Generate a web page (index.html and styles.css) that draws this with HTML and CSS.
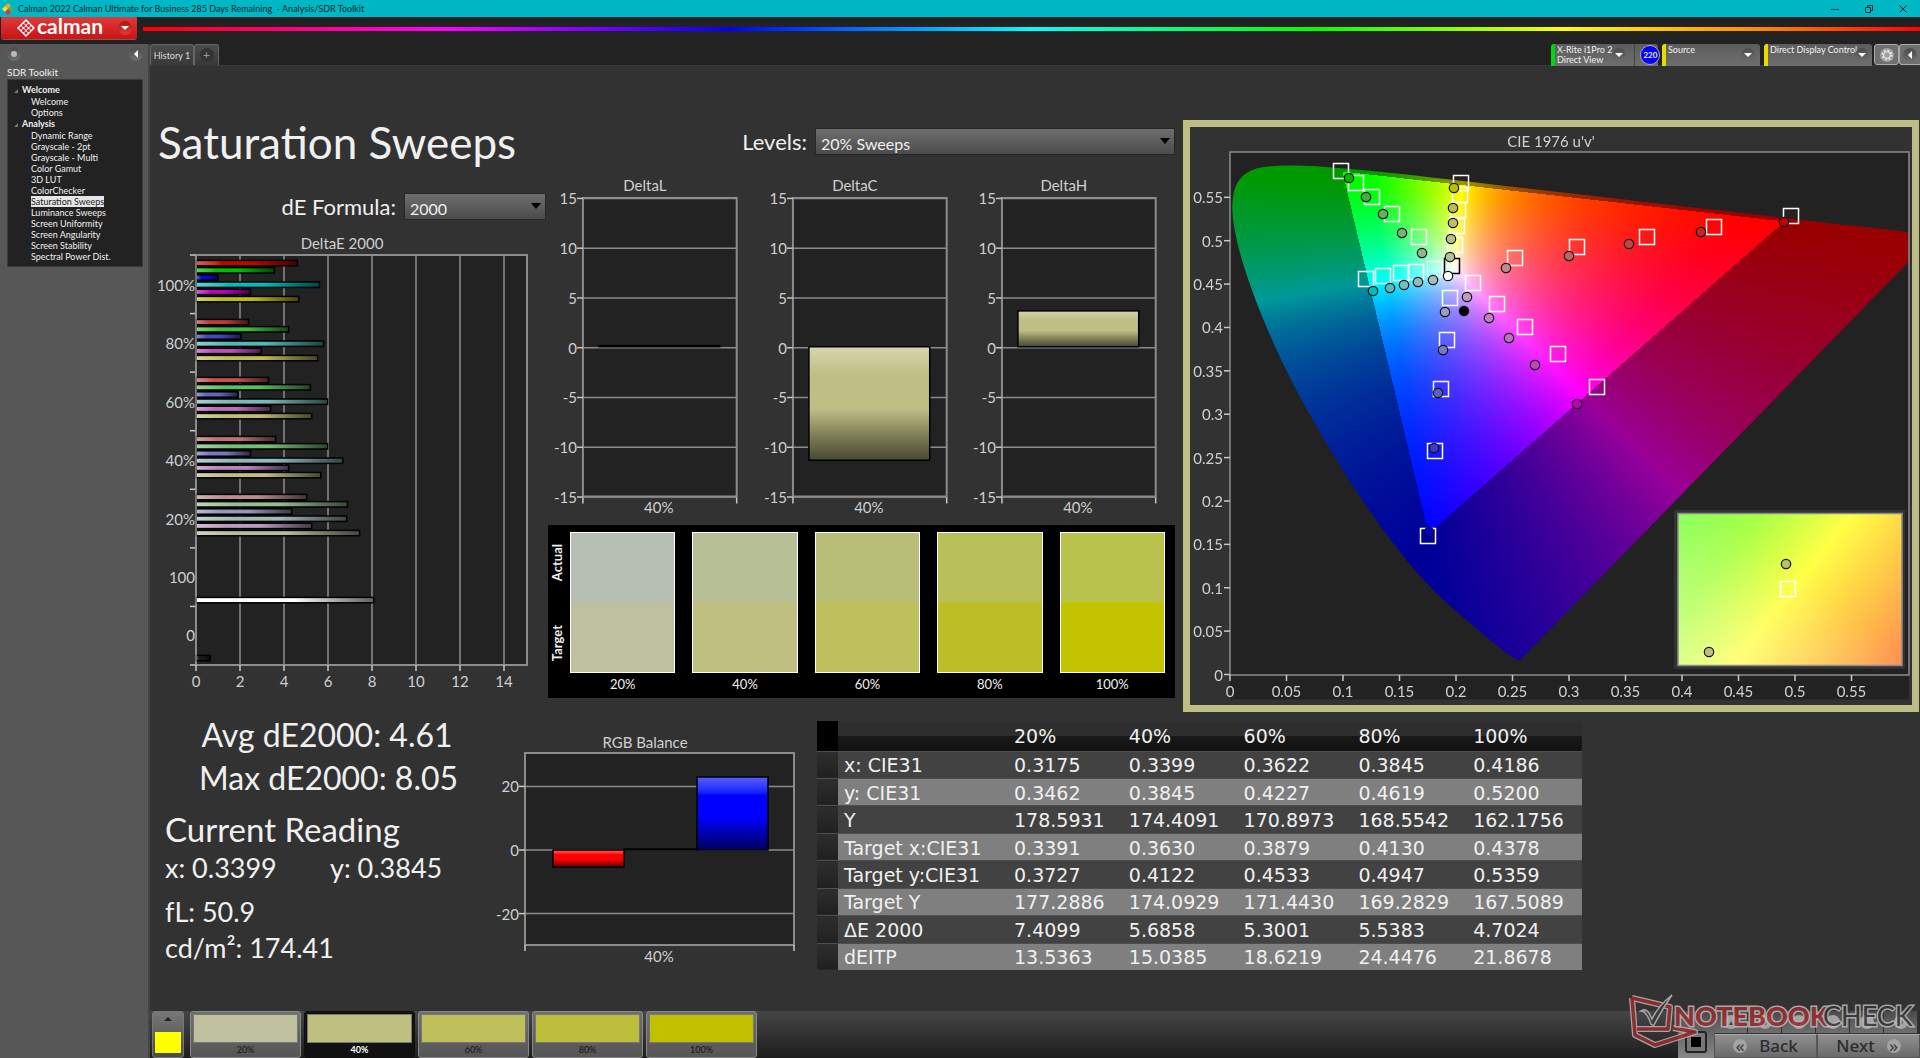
FILE: index.html
```html
<!DOCTYPE html>
<html lang="en">
<head>
<meta charset="utf-8">
<title>Calman 2022 - Analysis/SDR Toolkit</title>
<link rel="stylesheet" href="styles.css">
</head>
<body>
<header class="titlebar">
  <svg class="app-icon" viewBox="0 0 12 12" aria-hidden="true">
    <path d="M6 0l3 3-3 3-3-3z" fill="#f6a81c"/><path d="M9 3l3 3-3 3-3-3z" fill="#35c04a"/>
    <path d="M3 3l3 3-3 3-3-3z" fill="#f7e427"/><path d="M6 6l3 3-3 3-3-3z" fill="#e8265c"/>
  </svg>
  <span class="app-title">Calman 2022 Calman Ultimate for Business 285 Days Remaining&nbsp; - Analysis/SDR Toolkit</span>
  <div class="window-controls">
    <button aria-label="Minimize"><svg viewBox="0 0 10 10"><path d="M1 5.5h8"/></svg></button>
    <button aria-label="Restore"><svg viewBox="0 0 10 10"><path d="M1.500 3.500h5v5h-5zM3.500 3.500v-2h5v5h-2"/></svg></button>
    <button aria-label="Close"><svg viewBox="0 0 10 10"><path d="M1.500 1.500l7 7M8.500 1.500l-7 7"/></svg></button>
  </div>
</header>

<div class="brandbar">
  <button class="brand">
    <svg class="brand-mark" viewBox="0 0 18 18" aria-hidden="true">
      <path d="M9 0l9 9-9 9-9-9z" fill="#fff"/>
      <g fill="#d81e1e"><circle cx="9" cy="4" r="1.600"/><circle cx="6.500" cy="6.500" r="1.600"/><circle cx="11.500" cy="6.500" r="1.600"/><circle cx="4" cy="9" r="1.600"/><circle cx="9" cy="9" r="1.600"/><circle cx="14" cy="9" r="1.600"/><circle cx="6.500" cy="11.500" r="1.600"/><circle cx="11.500" cy="11.500" r="1.600"/><circle cx="9" cy="14" r="1.600"/></g>
    </svg>
    <span>calman</span>
    <i class="knob knob-red"><i class="caret-down"></i></i>
  </button>
  <div class="spectrum"></div>
</div>

<div class="workspace">
  <aside class="sidebar">
    <div class="sidebar-tools">
      <span class="knob"><i class="bead"></i></span>
      <button class="knob" aria-label="Collapse sidebar"><i class="caret-left"></i></button>
    </div>
    <h2>SDR Toolkit</h2>
    <nav class="tree">
      <h3>Welcome</h3>
      <a href="#">Welcome</a>
      <a href="#">Options</a>
      <h3>Analysis</h3>
      <a href="#">Dynamic Range</a>
      <a href="#">Grayscale - 2pt</a>
      <a href="#">Grayscale - Multi</a>
      <a href="#">Color Gamut</a>
      <a href="#">3D LUT</a>
      <a href="#">ColorChecker</a>
      <a href="#" class="current">Saturation Sweeps</a>
      <a href="#">Luminance Sweeps</a>
      <a href="#">Screen Uniformity</a>
      <a href="#">Screen Angularity</a>
      <a href="#">Screen Stability</a>
      <a href="#">Spectral Power Dist.</a>
    </nav>
  </aside>

  <div class="content">
    <div class="tabbar">
      <button class="tab">History 1</button>
      <button class="tab tab-add" aria-label="Add tab"><span class="knob knob-dark">+</span></button>
      <div class="devices">
        <div class="device device-meter">
          <span class="device-name">X-Rite i1Pro 2<br>Direct View</span>
          <button class="knob" aria-label="Meter menu"><i class="caret-down"></i></button>
          <span class="badge-slot"><span class="badge">220</span></span>
        </div>
        <div class="device device-source">
          <span class="device-name">Source</span>
          <button class="knob" aria-label="Source menu"><i class="caret-down"></i></button>
        </div>
        <div class="device device-display">
          <span class="device-name">Direct Display Control</span>
          <button class="knob" aria-label="Display menu"><i class="caret-down"></i></button>
        </div>
        <button class="tool" aria-label="Settings"><span class="knob knob-light">
          <svg class="gear" viewBox="0 0 12 12"><circle cx="6" cy="6" r="4.600" stroke-width="1.600" stroke-dasharray="1.800 1.810"/><circle cx="6" cy="6" r="3.400"/></svg></span></button>
        <button class="tool tool-last" aria-label="Collapse panel"><span class="knob"><i class="caret-left"></i></span></button>
      </div>
    </div>

    <main class="stage">
      <div class="top">
        <section class="col-error">
          <h1>Saturation Sweeps</h1>
          <div class="field">
            <label for="formula">dE Formula:</label>
            <span class="select formula"><select id="formula"><option>2000</option></select></span>
          </div>
          <svg id="delta-e" class="chart" viewBox="150 232 396 468" role="img" aria-label="DeltaE 2000"></svg>
        </section>

        <section class="col-delta">
          <div class="field">
            <label for="levels">Levels:</label>
            <span class="select levels"><select id="levels"><option>20% Sweeps</option></select></span>
          </div>
          <div class="delta-row">
            <svg id="delta-l" class="chart" viewBox="0 0 210 344" role="img" aria-label="DeltaL"></svg>
            <svg id="delta-c" class="chart" viewBox="0 0 210 344" role="img" aria-label="DeltaC"></svg>
            <svg id="delta-h" class="chart" viewBox="0 0 210 344" role="img" aria-label="DeltaH"></svg>
          </div>
          <div class="compare">
            <div class="compare-side"><span>Actual</span><span>Target</span></div>
            <figure><div class="pair p20"></div><figcaption>20%</figcaption></figure>
            <figure><div class="pair p40"></div><figcaption>40%</figcaption></figure>
            <figure><div class="pair p60"></div><figcaption>60%</figcaption></figure>
            <figure><div class="pair p80"></div><figcaption>80%</figcaption></figure>
            <figure><div class="pair p100"></div><figcaption>100%</figcaption></figure>
          </div>
        </section>

        <section class="col-cie">
          <div class="cie">
            <canvas id="cie-colors" width="722" height="578"></canvas>
            <svg id="cie-marks" viewBox="1190 127 722 578" role="img" aria-label="CIE 1976 u'v'"></svg>
          </div>
        </section>
      </div>

      <div class="bottom">
        <section class="stats">
          <p class="big">Avg dE2000: 4.61</p>
          <p class="big">Max dE2000: 8.05</p>
          <h2>Current Reading</h2>
          <p class="pair-xy"><span>x: 0.3399</span><span>y: 0.3845</span></p>
          <p class="lum">fL: 50.9</p>
          <p>cd/m²: 174.41</p>
        </section>
        <section><svg id="rgb" class="chart" viewBox="492 733 318 244" role="img" aria-label="RGB Balance"></svg></section>
        <section class="data">
          <table>
            <colgroup><col class="c-gutter"><col class="c-label"><col><col><col><col><col></colgroup>
            <thead><tr><td></td><th></th><th>20%</th><th>40%</th><th>60%</th><th>80%</th><th>100%</th></tr></thead>
            <tbody>
              <tr><td></td><th>x: CIE31</th><td>0.3175</td><td>0.3399</td><td>0.3622</td><td>0.3845</td><td>0.4186</td></tr>
              <tr><td></td><th>y: CIE31</th><td>0.3462</td><td>0.3845</td><td>0.4227</td><td>0.4619</td><td>0.5200</td></tr>
              <tr><td></td><th>Y</th><td>178.5931</td><td>174.4091</td><td>170.8973</td><td>168.5542</td><td>162.1756</td></tr>
              <tr><td></td><th>Target x:CIE31</th><td>0.3391</td><td>0.3630</td><td>0.3879</td><td>0.4130</td><td>0.4378</td></tr>
              <tr><td></td><th>Target y:CIE31</th><td>0.3727</td><td>0.4122</td><td>0.4533</td><td>0.4947</td><td>0.5359</td></tr>
              <tr><td></td><th>Target Y</th><td>177.2886</td><td>174.0929</td><td>171.4430</td><td>169.2829</td><td>167.5089</td></tr>
              <tr><td></td><th>ΔE 2000</th><td>7.4099</td><td>5.6858</td><td>5.3001</td><td>5.5383</td><td>4.7024</td></tr>
              <tr><td></td><th>dEITP</th><td>13.5363</td><td>15.0385</td><td>18.6219</td><td>24.4476</td><td>21.8678</td></tr>
            </tbody>
          </table>
        </section>
      </div>
    </main>

    <footer class="dock">
      <button class="current-color" aria-label="Current color"><i class="caret-up"></i><span></span></button>
      <button class="patch k20"><span></span>20%</button>
      <button class="patch k40 active"><span></span>40%</button>
      <button class="patch k60"><span></span>60%</button>
      <button class="patch k80"><span></span>80%</button>
      <button class="patch k100"><span></span>100%</button>
      <div class="transport">
        <button class="stop" aria-label="Stop"><i></i></button>
        <div class="transport-right">
          <div class="mini">
            <button aria-label="Up"><i class="knob knob-pale">▴</i></button>
            <button aria-label="Halt"><i class="knob knob-pale">■</i></button>
            <button aria-label="Play"><i class="knob knob-pale">▸</i></button>
            <button aria-label="Step"><i class="knob knob-pale">▹</i></button>
            <button aria-label="Loop"><i class="knob knob-pale">∞</i></button>
            <button aria-label="Repeat"><i class="knob knob-pale">↻</i></button>
          </div>
          <div class="pager">
            <button><i class="knob knob-pale">«</i>Back</button>
            <button>Next<i class="knob knob-pale">»</i></button>
          </div>
        </div>
      </div>
      <svg class="watermark" viewBox="0 0 288 56" role="img" aria-label="Notebookcheck">
        <g fill="none" stroke-linejoin="round">
          <path d="M4 4L42 13L40 35L9 35M4 4L7 41L27 51L67 38L45 34" stroke="#b9b9b9" stroke-width="6"/>
          <path d="M4 4L42 13L40 35L9 35M4 4L7 41L27 51L67 38L45 34" stroke="#9c2b2e" stroke-width="3.500"/>
        </g>
        <path d="M13 17q5-3 8 2l3 6q6-13 20-24-9 13-18 30-2 1-3-1-3-8-5-10-2-3-5-3z" fill="#3c3c3c" stroke="#b9b9b9" stroke-width="1.500"/>
        <text x="46" y="32" class="mark-bold">NOTEBOOK</text>
        <text x="195" y="32" class="mark-thin">CHECK</text>
      </svg>
    </footer>
  </div>
</div>
<script src="charts.js"></script>
</body>
</html>
```
FILE: styles.css
```css
* { box-sizing: border-box; }
body {
  margin: 0;
  min-height: 100vh;
  display: flex;
  flex-direction: column;
  background: #323232;
  color: #f0f0f0;
  font-family: Lato, "Liberation Sans", sans-serif;
  font-size: 15px;
}
h1, h2, h3, p, figure { margin: 0; font-weight: 400; }
button { border: 0; padding: 0; margin: 0; color: inherit; font: inherit; background: none; }
a { color: inherit; text-decoration: none; }
svg { display: block; }

/* window title */
.titlebar {
  height: 17px;
  display: flex;
  align-items: center;
  gap: 4px;
  padding-left: 2px;
  background: #00b7c6;
  color: #06262a;
}
.app-icon { width: 12px; height: 12px; }
.app-title { font-size: 9px; line-height: 16px; }
.window-controls { margin-left: auto; display: flex; }
.window-controls button { width: 34px; height: 16px; display: flex; justify-content: center; align-items: center; }
.window-controls svg { width: 10px; height: 10px; fill: none; stroke: #06262a; }

/* brand strip */
.brandbar { height: 27px; display: flex; background: #222; padding-left: 1px; gap: 6px; }
.brand {
  width: 136px;
  height: 23px;
  display: flex;
  align-items: center;
  padding-left: 16px;
  border-radius: 0 0 3px 3px;
  background: linear-gradient(#e03a3a, #c81414);
  border-bottom: 1px solid #8b5555;
  color: #fff;
  font-size: 21px;
  font-weight: 700;
  line-height: 18px;
}
.brand-mark { width: 18px; height: 18px; margin-right: 2px; }
.brand span { padding-bottom: 4px; }
.brand .knob-red { margin-left: auto; margin-right: 5px; }
.spectrum {
  flex: 1;
  height: 4px;
  margin-top: 10px;
  background: linear-gradient(90deg, #f00, #f0f 17%, #00f 33%, #0ff 50%, #0f0 66%, #ff0 80%, #f80 91%, #f00);
}

.knob {
  width: 14px;
  height: 14px;
  flex: none;
  display: inline-flex;
  align-items: center;
  justify-content: center;
  border-radius: 50%;
  background: linear-gradient(#4c4c4c, #6e6e6e);
  font-style: normal;
}
.knob-red { background: linear-gradient(#a81616, #e23c3c); }
.knob-dark { background: #333; color: #999; font-size: 12px; line-height: 14px; }
.knob-light { background: #a0a0a0; }
.knob-pale { background: #a4a4a4; color: #444; }
.caret-down { border: 4px solid transparent; border-top-color: #fff; border-bottom: 0; }
.caret-up { border: 4px solid transparent; border-bottom-color: #222; border-top: 0; }
.caret-left { border: 4px solid transparent; border-right-color: #fff; border-left: 0; }
.bead { width: 6px; height: 6px; border-radius: 50%; background: #bbb; }

.workspace { flex: 1; display: flex; }

/* sidebar */
.sidebar { width: 150px; flex: none; background: #575757; border-right: 2px solid #454545; padding: 3px 5px 0 7px; }
.sidebar-tools { display: flex; justify-content: space-between; height: 14px; }
.sidebar h2 { font-size: 10px; line-height: 12px; margin: 5px 0 1px; }
.tree { height: 188px; background: #222; border: 1px solid #3a3a3a; padding: 4px 0 0 23px; font-size: 9px; }
.tree a { display: block; width: max-content; height: 11px; line-height: 11px; }
.tree h3 { font-size: 9px; font-weight: 700; line-height: 12px; margin-left: -9px; position: relative; }
.tree h3::before { content: ""; position: absolute; left: -8px; top: 5px; border: 2px solid transparent; border-right-color: #777; border-bottom-color: #777; }
.tree .current { background: #e6e6e6; color: #222; }

.content { flex: 1; min-width: 0; display: flex; flex-direction: column; }

/* tabs and devices */
.tabbar { height: 22px; display: flex; background: #222; border-bottom: 1px solid #3a3a3a; }
.tab { width: 44px; background: linear-gradient(#4c4c4c, #383838); border: 1px solid #666; border-bottom: 0; border-radius: 3px 3px 0 0; font-size: 9px; color: #ddd; white-space: nowrap; }
.tab-add { width: 25px; display: flex; align-items: center; justify-content: center; }
.devices { margin-left: auto; display: flex; }
.device { height: 22px; display: flex; align-items: center; justify-content: space-between; margin-right: 4px; padding: 0 5px 0 2px; border-left: 4px solid #e6dc00; border-radius: 3px 3px 0 0; background: linear-gradient(#5c5c5c, #6e6e6e); }
.device-name { align-self: flex-start; font-size: 9px; line-height: 10px; padding-top: 1px; white-space: nowrap; }
.device-meter { width: 107px; border-left-color: #00d910; padding-right: 1px; }
.badge-slot { height: 22px; padding: 1px 0 0 5px; border-left: 1px solid #444; }
.device-meter .knob { margin-left: auto; margin-right: 8px; }
.device-source { width: 98px; }
.device-display { width: 108px; margin-right: 2px; }
.device-display .knob { margin-left: -2px; }
.badge { display: block; width: 20px; height: 20px; border-radius: 50%; background: #0000f5; border: 1px solid #aab; font-size: 8px; line-height: 18px; font-weight: 700; text-align: center; }
.tool { width: 25px; height: 21px; border: 1px solid #aaa; border-radius: 3px; background: #707070; display: flex; align-items: center; justify-content: center; }
.tool-last { width: 21px; border-right: 0; border-radius: 3px 0 0 3px; }
.gear { width: 12px; height: 12px; fill: none; stroke: #eee; }

/* stage */
.stage { flex: 1; }
.top { display: grid; grid-template-columns: 396fr 634fr 740fr; }
.col-error { padding-top: 48px; }
h1 { font-size: 44px; line-height: 56px; padding-left: 8px; margin-bottom: 23px; white-space: nowrap; }
.field { display: flex; justify-content: flex-end; align-items: center; gap: 8px; height: 27px; }
.field label { font-size: 22px; line-height: 27px; white-space: nowrap; }
.select { position: relative; height: 27px; }
.select::after { content: ""; position: absolute; right: 5px; top: 10px; border: 5px solid transparent; border-top: 6px solid #000; border-bottom: 0; }
.select select {
  appearance: none;
  width: 100%;
  height: 27px;
  margin: 0;
  padding: 3px 5px 0;
  display: block;
  border: 1px solid #262626;
  border-radius: 0;
  background: linear-gradient(#6f6f6f, #4b4b4b);
  color: #f0f0f0;
  font: 16px Lato, sans-serif;
}
.formula { width: 142px; }
.levels { width: 360px; }
.col-error .chart { margin-top: 12px; }
.chart { width: 100%; height: auto; }
.col-delta { padding: 62px 5px 0 0; }
.delta-row { display: grid; grid-template-columns: repeat(3, 1fr); margin-top: 23px; }

.compare { height: 173px; margin: 4px 0 0 2px; padding: 7px 10px 0 0; display: grid; grid-template-columns: 22px repeat(4, 123fr) 106fr; background: #000; }
.compare-side { display: flex; flex-direction: column; justify-content: space-between; align-items: center; height: 141px; padding: 12px 4px 12px 0; }
.compare-side span { writing-mode: vertical-rl; transform: rotate(180deg); font-size: 13px; font-weight: 700; line-height: 14px; }
.compare figure { padding-right: 17px; }
.compare figure:last-child { padding-right: 0; }
.pair { height: 141px; border: 1px solid #fff; }
.compare figcaption { font-size: 13px; line-height: 16px; padding-top: 3px; text-align: center; }
.p20 { background: linear-gradient(#b7bfb2 50%, #bfc09e 50%); }
.p40 { background: linear-gradient(#b7c095 50%, #bfbf80 50%); }
.p60 { background: linear-gradient(#b8be78 50%, #bfbf5c 50%); }
.p80 { background: linear-gradient(#b6bf58 50%, #bdbe27 50%); }
.p100 { background: linear-gradient(#b8c24c 50%, #c3c300 50%); }

.col-cie { padding: 54px 1px 0 3px; }
.cie { display: grid; border: 7px solid #bebd84; }
.cie > * { grid-area: 1 / 1; width: 100%; height: auto; display: block; }

/* chart parts */
.plot { fill: #222; stroke: #8c8c8c; stroke-width: 2; }
.line { stroke: #8c8c8c; stroke-width: 1.500; }
.tick { stroke: #c8c8c8; stroke-width: 1.500; }
.chart text, .cie text { fill: #d0d0d0; font-size: 15px; }
.mid { text-anchor: middle; }
.end { text-anchor: end; }
.bar { stroke: #000; stroke-width: 1.500; }
.target { fill: none; stroke: #fff; stroke-width: 1.500; }
.target-white { fill: none; stroke: #000; stroke-width: 1.500; }
.reading { stroke: #111; stroke-width: 1.200; }

/* lower half */
.bottom { display: grid; grid-template-columns: 342fr 318fr 772fr 338fr; align-items: start; }
.bottom > section:nth-child(2) { padding-top: 21px; }
.stats { padding: 1px 0 0 15px; }
.stats .big { font-size: 32px; line-height: 43px; width: 256px; margin-left: 34px; text-align: center; white-space: nowrap; }
.stats h2 { font-size: 33px; line-height: 40px; padding-top: 10px; }
.stats p { font-size: 27px; line-height: 36px; }
.stats .pair-xy { display: grid; grid-template-columns: 165px 1fr; line-height: 38px; }
.stats .lum { margin-top: 7px; line-height: 36px; }
.data { padding: 9px 0 0 7px; }
table { width: 100%; height: 249px; border-collapse: collapse; table-layout: fixed; font: 19px/22px "DejaVu Sans", sans-serif; }
.c-gutter { width: 21px; }
.c-label { width: 170px; }
th, td { padding: 1px 6px 0; text-align: left; font-weight: 400; white-space: nowrap; }
thead tr { height: 30px; background: linear-gradient(#2e2e2e 50%, #191919 50%, #121212); }
tbody tr { background: #424242; border-top: 1px solid #4e4e4e; }
tbody tr:nth-child(even) { background: #7f7f7f; }
tr td:first-child { background: linear-gradient(#2e2e2e, #202020); }
thead tr td:first-child { background: #000; }

/* dock */
.dock { height: 47px; display: flex; gap: 3px; position: relative; padding-left: 2px; background: linear-gradient(#464646, #1e1e1e); }
.current-color { width: 32px; margin-right: 3px; display: flex; flex-direction: column; align-items: center; gap: 11px; padding-top: 5px; border: 1px solid #777; border-radius: 3px; background: linear-gradient(#777, #4a4a4a); }
.current-color span { width: 26px; height: 21px; background: #ff0; }
.patch { width: 111px; border: 1px solid #888; border-radius: 3px; background: linear-gradient(#707070, #555); padding: 2px; font-size: 9px; line-height: 14px; color: #151515; }
.patch span { display: block; height: 29px; border: 1px solid #777; }
.patch.active { background: #111; border-color: #111; color: #fff; font-weight: 700; }
.k20 span { background: #bfc09e; }
.k40 span { background: #bfbf80; }
.k60 span { background: #bfbf5c; }
.k80 span { background: #bdbe3c; }
.k100 span { background: #c0c000; }
.transport { margin-left: auto; width: 242px; display: flex; }
.stop { width: 36px; background: linear-gradient(#4a4a4a, #888); display: flex; align-items: flex-end; justify-content: center; padding-bottom: 5px; }
.stop i { width: 22px; height: 22px; border: 6px solid #777; outline: 2px solid #222; outline-offset: -2px; border-radius: 3px; background: #000; }
.transport-right { flex: 1; display: flex; flex-direction: column; justify-content: space-between; }
.mini { display: grid; grid-template-columns: repeat(6, 34px); height: 22px; background: #2c2c2c; }
.mini button { background: linear-gradient(#4a4a4a, #6e6e6e); border-right: 1px solid #333; font-size: 10px; }
.mini .knob { font-size: 8px; }
.pager { display: grid; grid-template-columns: 1fr 1fr; height: 24px; }
.pager button { display: flex; align-items: center; justify-content: center; gap: 12px; background: linear-gradient(#8f8f8f, #6a6a6a); border: 1px solid #555; border-top-color: #aaa; color: #2c2c2c; font: 500 17px/20px "Noto Sans", sans-serif; }
.watermark { position: absolute; right: 4px; bottom: 8px; width: 288px; height: 56px; opacity: .85; }
.mark-bold, .mark-thin { font: 900 27px Lato, sans-serif; paint-order: stroke; stroke: #bbb; stroke-width: 3px; fill: #9c2b2e; }
.mark-thin { font-weight: 400; fill: #333; }
```
FILE: charts.js
```js
const NS = 'http://www.w3.org/2000/svg';

function add(parent, tag, attrs, text) {
  const el = document.createElementNS(NS, tag);
  for (const k in attrs) el.setAttribute(k, attrs[k]);
  if (text !== undefined) el.textContent = text;
  parent.appendChild(el);
  return el;
}
const label = (svg, x, y, cls, text) => add(svg, 'text', { x, y, class: cls }, text);
const line = (svg, x1, y1, x2, y2, cls) => add(svg, 'line', { x1, y1, x2, y2, class: cls });

let serial = 0;
// Glossy fill: highlight, plain colour, shade.
function gloss(svg, color, vertical) {
  const id = 'gloss' + serial++;
  const g = add(svg, 'linearGradient', vertical ? { id, x1: 0, y1: 0, x2: 0, y2: 1 } : { id });
  const mix = (to, pct) => `color-mix(in srgb, ${color} ${100 - pct}%, ${to})`;
  [[0, mix('white', 35)], [0.25, color], [0.55, color], [1, mix('black', 62)]].forEach(([offset, c]) =>
    add(g, 'stop', { offset, style: `stop-color:${c}` }));
  return `url(#${id})`;
}

/* DeltaE 2000 */
(function () {
  const svg = document.getElementById('delta-e');
  const x0 = 196, unit = 22;
  label(svg, 342, 249, 'mid', 'DeltaE 2000');
  add(svg, 'rect', { x: x0, y: 255, width: 331, height: 410, class: 'plot' });
  for (let v = 0; v < 15; v += 2) {
    const x = x0 + v * unit;
    if (v) line(svg, x, 255, x, 665, 'line');
    line(svg, x, 665, x, 671, 'tick');
    label(svg, x, 687, 'mid', v);
  }
  for (let i = 0; i < 8; i++) line(svg, 190, 255 + i * 58.57, x0, 255 + i * 58.57, 'tick');
  ['100%', '80%', '60%', '40%', '20%', '100', '0'].forEach((t, i) => label(svg, 195, 291 + i * 58.4, 'end', t));
  const groups = [
    [263, [4.61, 3.56, 1, 5.61, 2.48, 4.67], ['#c80000', '#00be00', '#0a0ac8', '#00bebe', '#be00be', '#bebe00']],
    [322, [2.39, 4.21, 2.05, 5.8, 2.97, 5.53], ['#c03a3a', '#3cbe3c', '#4646be', '#50b9b9', '#c04cc0', '#bebe50']],
    [380, [3.3, 5.2, 1.9, 5.98, 3.39, 5.26], ['#c05252', '#5abe5a', '#6464be', '#78b9b9', '#be6ebe', '#bebe6e']],
    [439, [3.62, 5.98, 2.48, 6.67, 4.21, 5.67], ['#c07272', '#78be78', '#7878c0', '#8cb9b9', '#be82be', '#bebe82']],
    [497, [5.03, 6.89, 4.35, 6.85, 5.26, 7.44], ['#be8c8c', '#96be96', '#9696be', '#a0b9b9', '#be9bbe', '#b9b99b']],
    [600, [8.08], ['#fff']],
    [658, [0.64], ['#181818']]
  ];
  groups.forEach(([y, values, colors]) => values.forEach((v, i) =>
    add(svg, 'rect', { x: x0, y: y + i * 7.2 - 2.6, width: v * unit, height: 5.4, class: 'bar', fill: gloss(svg, colors[i]) })));
  line(svg, x0, 255, x0, 665, 'line');
})();

/* DeltaL, DeltaC, DeltaH */
[['delta-l', 'DeltaL', 0.1], ['delta-c', 'DeltaC', -11.4], ['delta-h', 'DeltaH', 3.6]].forEach(([id, title, value]) => {
  const svg = document.getElementById(id);
  label(svg, 99, 13, 'mid', title);
  add(svg, 'rect', { x: 37, y: 20, width: 154, height: 299, class: 'plot' });
  for (let v = 15; v >= -15; v -= 5) {
    const y = 170 - v * 9.97;
    line(svg, 37, y, 191, y, 'line');
    line(svg, 31, y, 37, y, 'tick');
    label(svg, 31, y + 6, 'end', v);
  }
  line(svg, 37, 320, 37, 326, 'tick');
  line(svg, 191, 320, 191, 326, 'tick');
  const top = value > 0 ? 170 - value * 9.97 : 170;
  add(svg, 'rect', { x: 53, y: top - 1, width: 121, height: Math.abs(value) * 9.97, class: 'bar', fill: gloss(svg, '#bfbe85', true) });
  label(svg, 113, 336, 'mid', '40%');
});

/* RGB Balance */
(function () {
  const svg = document.getElementById('rgb');
  label(svg, 645, 748, 'mid', 'RGB Balance');
  add(svg, 'rect', { x: 525, y: 753, width: 269, height: 192, class: 'plot' });
  [20, 0, -20].forEach(v => {
    const y = 850 - v * 3.18;
    line(svg, 525, y, 794, y, 'line');
    line(svg, 519, y, 525, y, 'tick');
    label(svg, 519, y + 6, 'end', v);
  });
  line(svg, 525, 945, 525, 951, 'tick');
  line(svg, 794, 945, 794, 951, 'tick');
  add(svg, 'rect', { x: 553, y: 850, width: 71, height: 17, class: 'bar', fill: gloss(svg, '#f00', true) });
  add(svg, 'rect', { x: 624, y: 849, width: 73, height: 1, class: 'bar' });
  add(svg, 'rect', { x: 697, y: 777, width: 71, height: 73, class: 'bar', fill: gloss(svg, '#00f', true) });
  label(svg, 659, 962, 'mid', '40%');
})();

/* CIE 1976 u'v' */
const OX = 1230, OY = 674.5, SX = 1130, SY = 867.6;

(function () {
  const canvas = document.getElementById('cie-colors');
  const ctx = canvas.getContext('2d');
  const W = canvas.width, H = canvas.height, left = 1190, top = 127;
  const locus = [[.1741, .005], [.1714, .0051], [.1644, .0109], [.1566, .0177], [.144, .0297], [.1355, .0399], [.1241, .0578],
    [.1096, .0868], [.0913, .1327], [.0687, .2007], [.0454, .295], [.0235, .4127], [.0082, .5384], [.0039, .6548], [.0139, .7502],
    [.0389, .812], [.0743, .8338], [.1142, .8262], [.1547, .8059], [.1929, .7816], [.2296, .7543], [.3016, .6923], [.3731, .6245],
    [.4441, .5547], [.5125, .4866], [.5752, .4242], [.627, .3725], [.6658, .334], [.6915, .3083], [.719, .2809], [.7347, .2653]];
  const toPixel = ([x, y]) => {
    const d = -2 * x + 12 * y + 3;
    return [OX + 4 * x / d * SX - left, OY - 9 * y / d * SY - top];
  };
  const gamut = [[1784, 221], [1342, 171], [1428, 533]].map(([x, y]) => [x - left, y - top]);
  const side = (a, b, x, y) => (b[0] - a[0]) * (y - a[1]) - (b[1] - a[1]) * (x - a[0]);

  const img = ctx.createImageData(W, H);
  for (let j = 0; j < H; j++) {
    for (let i = 0; i < W; i++) {
      const u = (i + left - OX) / SX, v = Math.max((OY - j - top) / SY, 0.001);
      const X = 9 * u / (4 * v), Z = (12 - 3 * u - 20 * v) / (4 * v);
      // XYZ to linear sRGB primaries, brightest channel at full level
      const rgb = [
        3.2406 * X - 1.5372 - 0.4986 * Z,
        -0.9689 * X + 1.8758 + 0.0415 * Z,
        0.0557 * X - 0.204 + 1.057 * Z
      ].map(c => Math.max(c, 0));
      const peak = Math.max(...rgb) || 1;
      const inside = gamut.every((a, k) => side(a, gamut[(k + 1) % 3], i, j) < 0);
      const p = (j * W + i) * 4;
      rgb.forEach((c, k) => { img.data[p + k] = 255 * c / peak * (inside ? 1 : 0.6); });
      img.data[p + 3] = 255;
    }
  }
  const colors = document.createElement('canvas');
  colors.width = W;
  colors.height = H;
  colors.getContext('2d').putImageData(img, 0, 0);

  ctx.fillStyle = '#323232';
  ctx.fillRect(0, 0, W, H);
  ctx.fillStyle = '#222';
  ctx.fillRect(40, 25, 679, 548 - 0.5);
  ctx.save();
  ctx.beginPath();
  ctx.rect(40, 25, 679, 548);
  ctx.clip();
  ctx.beginPath();
  const pts = locus.map(toPixel);
  ctx.moveTo(...pts[0]);
  for (let k = 1; k < pts.length - 1; k++) {
    const [a, b] = [pts[k], pts[k + 1]];
    ctx.quadraticCurveTo(a[0], a[1], (a[0] + b[0]) / 2, (a[1] + b[1]) / 2);
  }
  ctx.lineTo(...pts[pts.length - 1]);
  ctx.closePath();
  ctx.clip();
  ctx.drawImage(colors, 0, 0);
  ctx.restore();
})();

(function () {
  const svg = document.getElementById('cie-marks');
  label(svg, 1551, 147, 'mid', "CIE 1976 u'v'");
  add(svg, 'rect', { x: 1230, y: 152, width: 679, height: 523, class: 'line', fill: 'none' });
  for (let i = 0; i < 12; i++) {
    const t = String(+(i * 0.05).toFixed(2));
    const x = OX + i * 0.05 * SX, y = OY - i * 0.05 * SY;
    line(svg, x, 675, x, 681, 'tick');
    label(svg, x, 697, 'mid', t);
    line(svg, 1224, y, 1230, y, 'tick');
    label(svg, 1223, y + 6, 'end', t);
  }
  const targets = [[1341, 171], [1356, 183], [1372, 197], [1392, 214], [1419, 237],
    [1461, 183], [1460, 195], [1458, 210], [1457, 226], [1455, 245],
    [1366, 279], [1383, 276], [1401, 273], [1416, 272], [1435, 269],
    [1473, 283], [1497, 304], [1525, 327], [1558, 354], [1597, 387],
    [1450, 298], [1447, 340], [1441, 389], [1435, 451], [1428, 536],
    [1515, 258], [1577, 247], [1647, 237], [1714, 227], [1791, 216]];
  const square = (x, y, cls) => add(svg, 'rect', { x: x - 7.5, y: y - 7.5, width: 15, height: 15, class: cls });
  const dot = (x, y, fill) => add(svg, 'circle', { cx: x, cy: y, r: 4.7, class: 'reading', fill });
  targets.forEach(([x, y]) => square(x, y, 'target'));
  square(1452, 266, 'target-white');
  const readings = [
    [1349, 178, '#00b400'], [1366, 197, '#3cb43c'], [1383, 214, '#5ab45a'], [1402, 233, '#73b473'], [1422, 253, '#91b491'],
    [1454, 188, '#bebe00'], [1453, 208, '#bebe46'], [1453, 223, '#bebe69'], [1451, 239, '#bebe82'], [1450, 257, '#bebe9b'],
    [1373, 291, '#00bebe'], [1390, 288, '#50bebe'], [1404, 285, '#78bebe'], [1418, 282, '#8cbebe'], [1433, 280, '#a5bebe'],
    [1467, 297, '#be9bbe'], [1489, 318, '#be82be'], [1509, 338, '#be6ebe'], [1535, 365, '#be46be'], [1577, 404, '#be00be'],
    [1445, 312, '#9b9bbe'], [1443, 350, '#7878be'], [1438, 393, '#5f5fbe'], [1434, 448, '#3c3cbe'], [1429, 532, '#0000c8'],
    [1506, 268, '#be8c8c'], [1569, 256, '#be6464'], [1629, 244, '#be4646'], [1701, 232, '#be2828'], [1784, 222, '#be0000'],
    [1448, 276, '#fff'], [1464, 311, '#000']];
  readings.forEach(([x, y, fill]) => dot(x, y, fill));

  // Close-up of the selected level
  const ramp = (id, box, stops) => {
    const g = add(svg, 'linearGradient', Object.assign({ id, gradientUnits: 'userSpaceOnUse' }, box));
    stops.forEach(([offset, color, opacity]) => add(g, 'stop', { offset, 'stop-color': color, 'stop-opacity': opacity }));
  };
  ramp('hue', { x1: 1677, y1: 513, x2: 1889, y2: 681 },
    [[0, '#82ff50', 1], [0.25, '#aaff48', 1], [0.51, '#ffff46', 1], [0.72, '#ffce46', 1], [1, '#ff8c50', 1]]);
  ramp('haze', { x1: 1677, y1: 666, x2: 1770, y2: 548 }, [[0, '#fff', 0.4], [1, '#fff', 0]]);
  add(svg, 'rect', { x: 1674, y: 510, width: 231, height: 159, fill: '#333' });
  add(svg, 'rect', { x: 1678, y: 513.5, width: 224, height: 152, fill: 'url(#hue)' });
  add(svg, 'rect', { x: 1678, y: 513.5, width: 224, height: 152, fill: 'url(#haze)', class: 'line' });
  square(1788, 589, 'target');
  dot(1786, 564, '#bebe6e');
  dot(1709, 652, '#bebe82');
})();
```
